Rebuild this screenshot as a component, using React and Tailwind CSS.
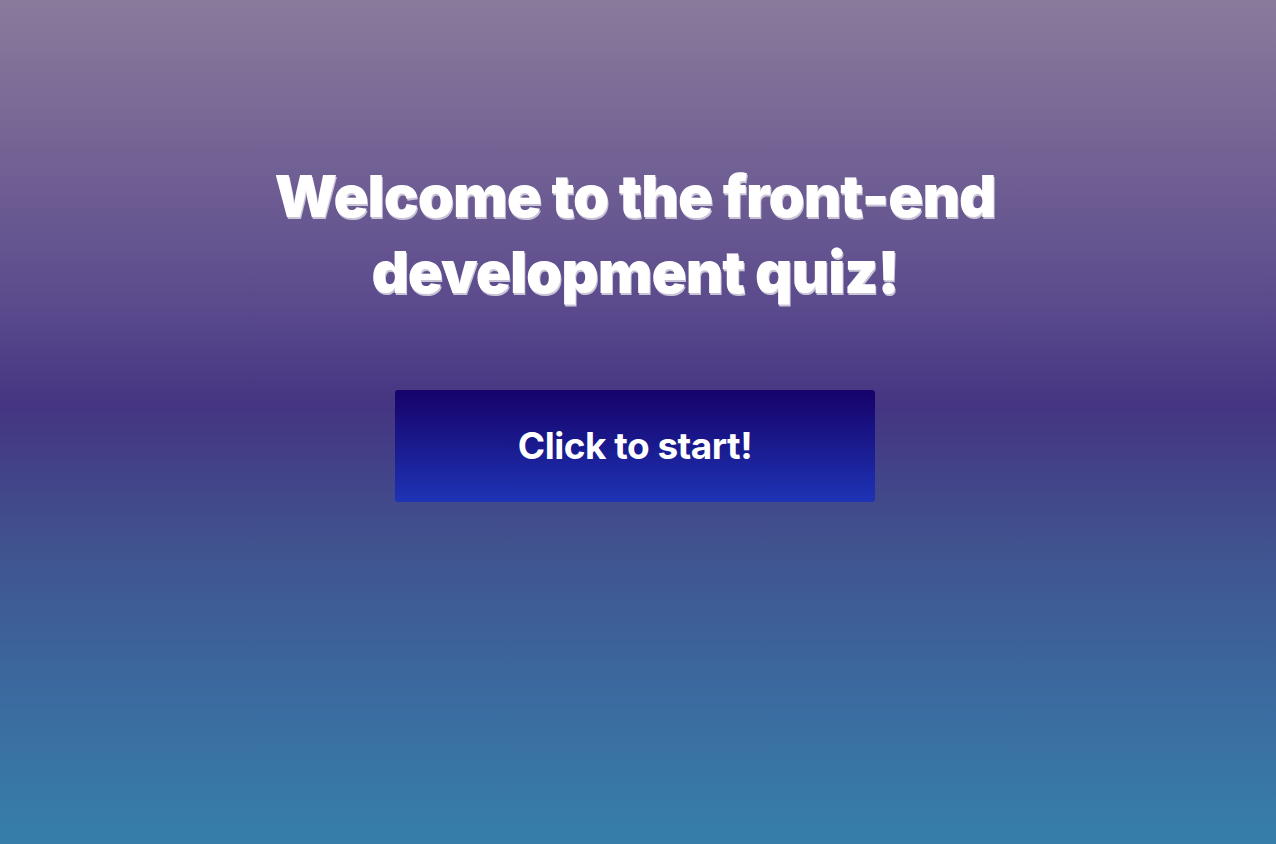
export default function App() {
  return (
    <div className="min-h-[844px] w-full bg-[linear-gradient(180deg,#8a7b9c_0%,#5d4c8d_35%,#453582_48%,#40538f_65%,#3b6a9f_82%,#367faa_100%)] font-['Inter','Liberation_Sans',sans-serif]">
      <div className="flex flex-col items-center pt-[158px] pr-[6px]">
        <h1 className="w-[780px] text-center text-[58px] font-black leading-[76px] tracking-[-1px] text-white [text-shadow:1px_2px_0_#c9c4d6]">
          Welcome to the front-end development quiz!
        </h1>
        <button className="mt-[80px] h-[112px] w-[480px] rounded-[3px] bg-[linear-gradient(180deg,#16026a_0%,#1a1a8e_50%,#1e34b6_100%)] text-[37px] font-bold tracking-[-0.5px] text-white">
          Click to start!
        </button>
      </div>
    </div>
  );
}
